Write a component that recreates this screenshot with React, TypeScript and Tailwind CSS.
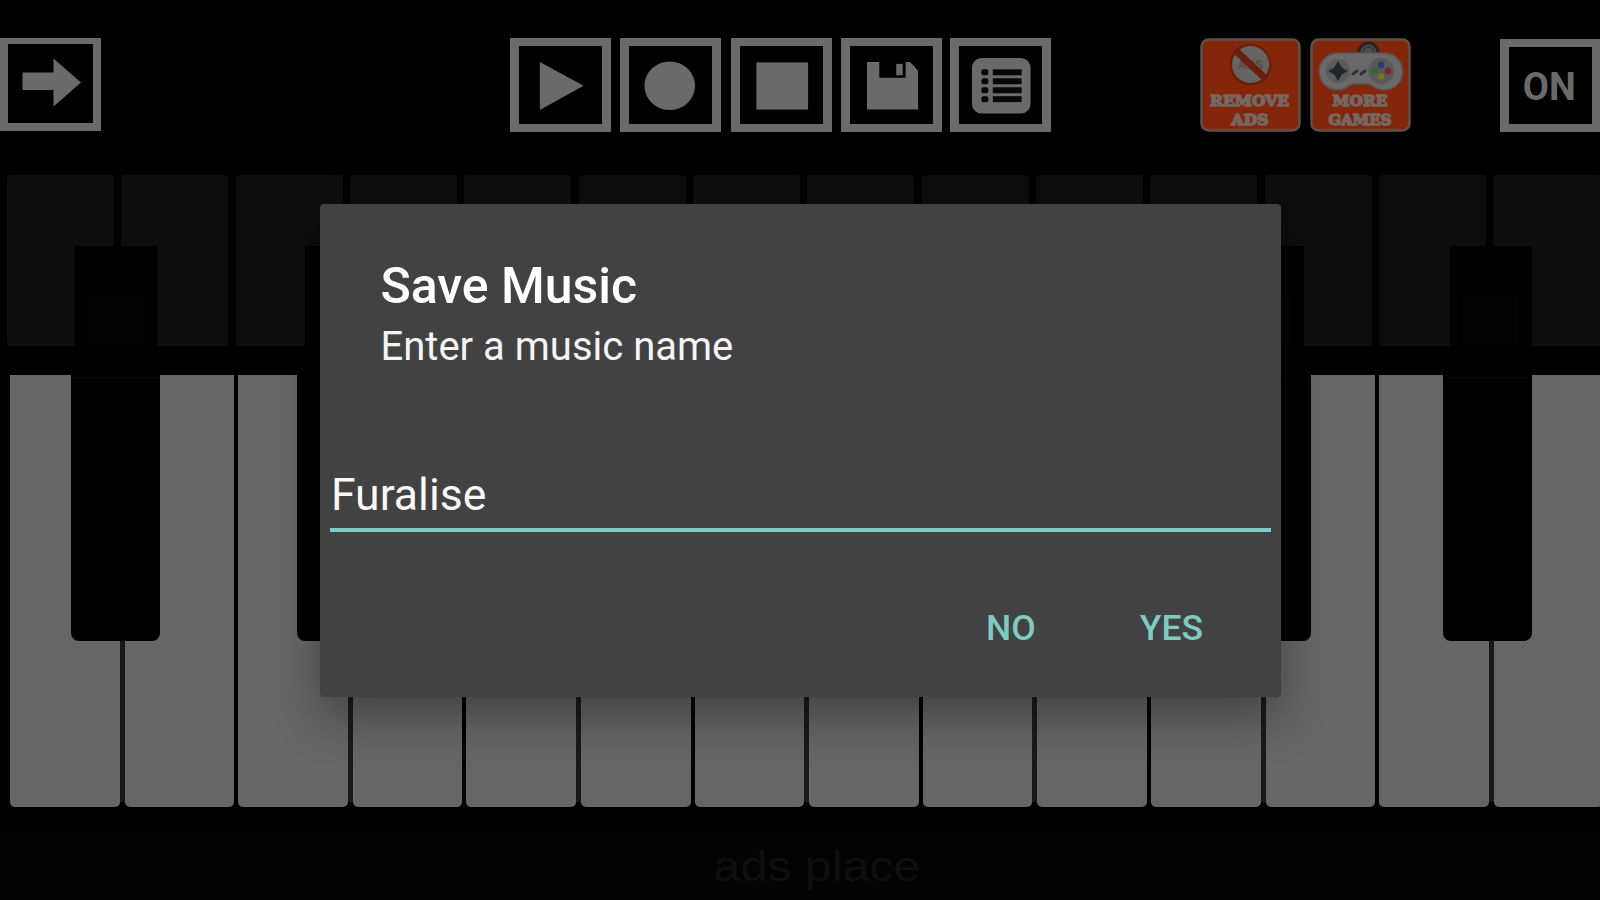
import type { ReactNode } from "react";
import clsx from "clsx";

// Black keys sit on the boundary after the n-th white key.
const miniBlackKeys = [
  { id: "a1", left: 74.5 },
  { id: "c2", left: 305 },
  { id: "d2", left: 419 },
  { id: "f2", left: 648 },
  { id: "g2", left: 762 },
  { id: "a2", left: 877 },
  { id: "c3", left: 1107 },
  { id: "d3", left: 1221.5 },
  { id: "f3", left: 1450 },
];

const blackKeys = [
  { id: "a1", left: 71 },
  { id: "c2", left: 297 },
  { id: "d2", left: 420 },
  { id: "f2", left: 644 },
  { id: "g2", left: 762 },
  { id: "a2", left: 880 },
  { id: "c3", left: 1102 },
  { id: "d3", left: 1221.5 },
  { id: "f3", left: 1443 },
];

const whiteKeys = Array.from({ length: 14 }, (_, i) => i);

function ToolButton({
  label,
  className,
  children,
}: {
  label: string;
  className?: string;
  children: ReactNode;
}) {
  return (
    <button
      aria-label={label}
      className={clsx(
        "h-[93.5px] w-[100.5px] shrink-0 border-x-[9px] border-y-[8px] border-[#6a6a6a] bg-black",
        className,
      )}
    >
      <svg viewBox="0 0 83 78" className="block h-[77.5px] w-[82.5px]" fill="#6a6a6a">
        {children}
      </svg>
    </button>
  );
}

function RemoveAds() {
  return (
    <svg viewBox="0 0 101 94" className="h-[94px] w-[101px] shrink-0">
      <rect x="1.5" y="1.5" width="98" height="91" rx="7" fill="#84260a" stroke="#5d514c" strokeWidth="2.5" />
      <circle cx="50.5" cy="26.5" r="21" fill="#6b1f0b" />
      <circle cx="50.5" cy="26.5" r="18.5" fill="#666363" />
      <text x="50.5" y="31" textAnchor="middle" fontFamily="Roboto, sans-serif" fontWeight="900" fontSize="13" fill="#574f4f">
        ADS
      </text>
      <path d="M35 12 L66 41" stroke="#6b200c" strokeWidth="7" />
      <g fill="#746862" stroke="#746862" strokeWidth="1.5" fontFamily="'DejaVu Serif', serif" fontWeight="bold" fontSize="15.5">
        <text x="10" y="68" textLength="79" lengthAdjust="spacingAndGlyphs">REMOVE</text>
        <text x="31.5" y="87" textLength="37" lengthAdjust="spacingAndGlyphs">ADS</text>
      </g>
    </svg>
  );
}

function MoreGames() {
  return (
    <svg viewBox="0 0 101 94" className="h-[94px] w-[101px] shrink-0">
      <rect x="1.5" y="1.5" width="98" height="91" rx="7" fill="#84260a" stroke="#5d514c" strokeWidth="2.5" />
      <circle cx="58.5" cy="14.5" r="9.5" fill="#4d4a49" stroke="#252525" strokeWidth="3" />
      <circle cx="58.5" cy="14.5" r="5.5" fill="none" stroke="#343434" strokeWidth="1.5" />
      <path
        d="M28 15 H73 A18.5 18.5 0 1 1 66 50 Q61 46 56 46 H44 Q40 46 36 50 A18.5 18.5 0 1 1 28 15 Z"
        fill="#696969"
        stroke="#595554"
        strokeWidth="1.5"
      />
      <circle cx="28" cy="33" r="12" fill="#5b5b5b" />
      <path d="M28 25 L31 30 L36 33 L31 36 L28 41 L25 36 L20 33 L25 30 Z" fill="#20272a" stroke="#20272a" strokeWidth="2" />
      <path d="M43 36 L47 33 M51 36 L55 33" stroke="#303030" strokeWidth="3" strokeLinecap="round" />
      <circle cx="71" cy="33" r="13" fill="#595959" />
      <circle cx="71" cy="27" r="3.3" fill="#263e75" />
      <circle cx="78" cy="33" r="3.3" fill="#80202b" />
      <circle cx="64.5" cy="33" r="3.3" fill="#2d6a32" />
      <circle cx="71" cy="38.5" r="3.3" fill="#78721c" />
      <g fill="#746862" stroke="#746862" strokeWidth="1.5" fontFamily="'DejaVu Serif', serif" fontWeight="bold" fontSize="15.5">
        <text x="22.5" y="68" textLength="55" lengthAdjust="spacingAndGlyphs">MORE</text>
        <text x="18.5" y="87" textLength="63" lengthAdjust="spacingAndGlyphs">GAMES</text>
      </g>
    </svg>
  );
}

function Toolbar() {
  return (
    <header className="flex h-[175px] items-start pt-[38px]">
      <button
        aria-label="Next"
        className="h-[93px] w-[100.5px] shrink-0 border-x-[8.5px] border-t-[6px] border-b-[8px] border-[#6a6a6a] bg-black"
      >
        <svg viewBox="0 0 84 79" className="block h-[79px] w-[84px]" fill="#6a6a6a">
          <path d="M14.5 28.5 H45.5 V14.5 L73 38.5 L45.5 62.5 V46 H14.5 Z" />
        </svg>
      </button>
      <div className="ml-[409.5px] flex gap-[9.6px]">
        <ToolButton label="Play">
          <path d="M21 16 L65 40 L21 64.5 Z" />
        </ToolButton>
        <ToolButton label="Record">
          <ellipse cx="41" cy="40" rx="25.5" ry="24.5" />
        </ToolButton>
        <ToolButton label="Stop" className="ml-[1.2px]">
          <rect x="16.5" y="16.5" width="52" height="47.5" />
        </ToolButton>
        <ToolButton label="Save">
          <path d="M17 16 H29.5 V32 H56 V16 H60.5 L68.5 25 V64 H17 Z" />
          <rect x="46.5" y="18" width="6.5" height="11.5" />
        </ToolButton>
        <ToolButton label="Music list" className="-ml-[1.2px]">
          <rect x="13" y="12" width="59" height="56" rx="10" />
          {[23.5, 32.5, 41.5, 50.5].map((y) => (
            <g key={y} fill="#080808">
              <rect x="22.5" y={y} width="7" height="6" rx="2" />
              <rect x="34" y={y} width="29" height="6" />
            </g>
          ))}
        </ToolButton>
      </div>
      <div className="ml-[149px] flex gap-[9px]">
        <RemoveAds />
        <MoreGames />
      </div>
      <button className="mt-px ml-[89px] flex h-[93px] w-[102px] shrink-0 items-center justify-center border-y-[8px] border-r-[10px] border-l-[9px] border-[#6a6a6a] bg-black pt-[3px] pr-[2px] text-[38px] leading-none font-bold text-[#6a6a6a]">
        ON
      </button>
    </header>
  );
}

function MiniKeyboard() {
  return (
    <div className="relative h-[200px] overflow-hidden">
      <div className="flex gap-[7.35px] pl-[7px]">
        {whiteKeys.map((key) => (
          <div key={key} className="h-[171px] w-[107px] shrink-0 rounded-[3px] bg-[#0d0d0d]" />
        ))}
      </div>
      {miniBlackKeys.map(({ id, left }) => (
        <div key={id} className="absolute top-[71px] h-[100px] w-[82px] bg-[#010101] pt-[50px]" style={{ left }}>
          <div className="mx-auto h-[48px] w-[56px] bg-[#030303]" />
        </div>
      ))}
    </div>
  );
}

function Keyboard() {
  return (
    <div className="relative h-[457px] overflow-hidden">
      <div className="flex pl-[10px]">
        {whiteKeys.map((key) => (
          <div key={key} className="flex shrink-0">
            <div className="h-[431.5px] w-[109.6px] rounded-b-[5px] bg-[#666]" />
            {key % 2 === 0 ? (
              <div className="h-[427px] w-[5px] bg-[#1a1a1a]" />
            ) : (
              <div className="w-[4px] bg-black" />
            )}
          </div>
        ))}
      </div>
      {blackKeys.map(({ id, left }) => (
        <div
          key={id}
          className="absolute top-0 h-[266px] w-[89px] rounded-b-[8px] bg-black pt-[2px]"
          style={{ left }}
        >
          <div className="h-px bg-[#080808]" />
        </div>
      ))}
    </div>
  );
}

function SaveDialog() {
  return (
    <div
      role="dialog"
      className="absolute top-[203.5px] left-[320px] h-[493.5px] w-[961px] rounded-[4px] bg-[#424242] shadow-[0_20px_46px_rgba(0,0,0,0.34)]"
    >
      <div className="px-[60.5px] pt-[52px]">
        <h1 className="text-[50px] leading-[60px] font-medium whitespace-nowrap text-white">Save Music</h1>
        <p className="text-[40px] leading-[62px] whitespace-nowrap text-[#f4f4f4]">Enter a music name</p>
      </div>
      <div className="mx-[10px] mt-[85px] flex h-[69px] items-center border-b-[4px] border-[#80cbc1] pl-[1px] text-[44.5px] text-[#f8f8f8]">
        Furalise
      </div>
      <div className="mt-[71px] flex justify-end gap-[104px] pr-[78px] text-[35.5px] leading-[50px] font-medium text-[#80cbc1]">
        <button>NO</button>
        <button>YES</button>
      </div>
    </div>
  );
}

export default function App() {
  return (
    <div className="relative flex h-[900px] w-[1600px] flex-col overflow-hidden bg-black font-['Roboto',sans-serif]">
      <Toolbar />
      <MiniKeyboard />
      <Keyboard />
      <footer className="flex flex-1 items-center justify-center bg-[#030303] pt-[2px] pl-[34px] font-['Liberation_Sans',sans-serif] text-[42px] leading-none text-[#0f0f0f]">
        <span className="scale-x-[1.15]">ads place</span>
      </footer>
      <SaveDialog />
    </div>
  );
}
